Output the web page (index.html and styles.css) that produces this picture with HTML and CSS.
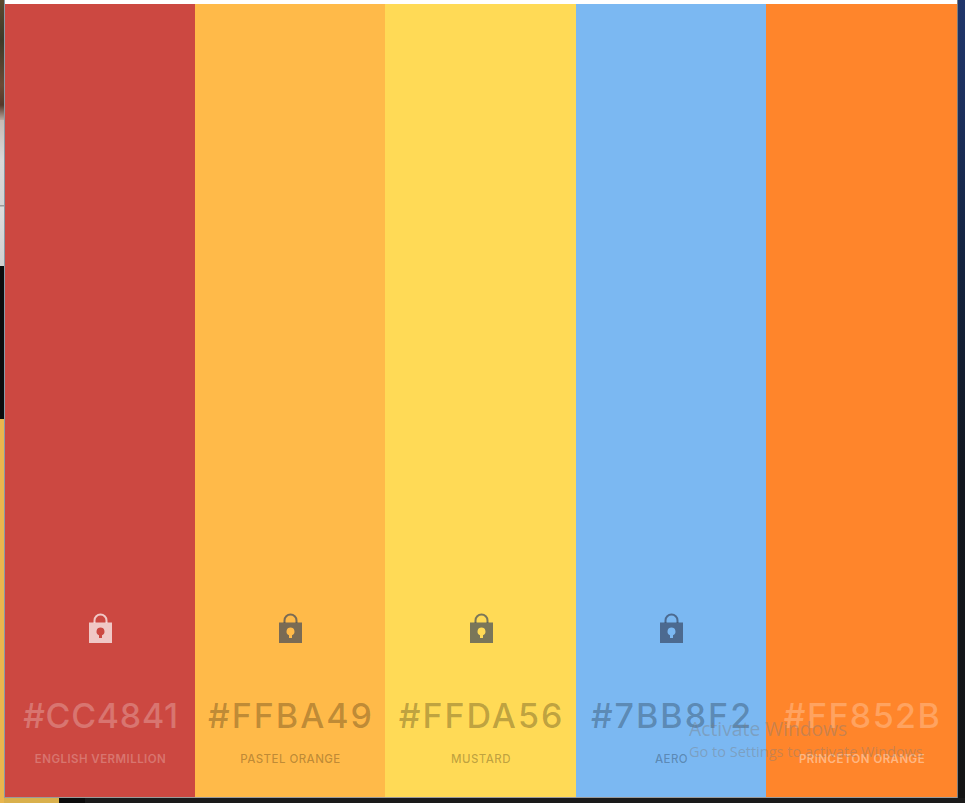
FILE: index.html
```html
<!DOCTYPE html>
<html lang="en">
<head>
  <meta charset="UTF-8" />
  <title>Palette</title>
  <link rel="stylesheet" href="styles.css">
</head>
<body>
  <div class="desktop">
    <div class="side-left">
      <div class="side-photo"></div>
      <div class="side-light"></div>
      <div class="side-black"></div>
      <div class="side-yellow"></div>
    </div>

    <main class="window">
      <div class="palette">
        <section class="swatch swatch-light" style="background: #cc4841;">
          <svg class="lock" viewBox="0 0 23 31" width="23" height="31">
            <path class="shackle" d="M5.500 10V7.500a6 6 0 0 1 12 0V10"/>
            <path class="lock-body" d="M0 9.500h23V30H0z"/>
            <path class="keyhole" style="fill: #cc4841;" d="M11.500 14.500a4 4 0 0 1 1.500 7.700V25h-3v-2.800a4 4 0 0 1 1.500-7.700z"/>
          </svg>
          <div class="hex">#CC4841</div>
          <div class="name">ENGLISH VERMILLION</div>
        </section>

        <section class="swatch" style="background: #ffba49;">
          <svg class="lock" viewBox="0 0 23 31" width="23" height="31">
            <path class="shackle" d="M5.500 10V7.500a6 6 0 0 1 12 0V10"/>
            <path class="lock-body" d="M0 9.500h23V30H0z"/>
            <path class="keyhole" style="fill: #ffba49;" d="M11.500 14.500a4 4 0 0 1 1.500 7.700V25h-3v-2.800a4 4 0 0 1 1.500-7.700z"/>
          </svg>
          <div class="hex">#FFBA49</div>
          <div class="name">PASTEL ORANGE</div>
        </section>

        <section class="swatch" style="background: #ffda56;">
          <svg class="lock" viewBox="0 0 23 31" width="23" height="31">
            <path class="shackle" d="M5.500 10V7.500a6 6 0 0 1 12 0V10"/>
            <path class="lock-body" d="M0 9.500h23V30H0z"/>
            <path class="keyhole" style="fill: #ffda56;" d="M11.500 14.500a4 4 0 0 1 1.500 7.700V25h-3v-2.800a4 4 0 0 1 1.500-7.700z"/>
          </svg>
          <div class="hex">#FFDA56</div>
          <div class="name">MUSTARD</div>
        </section>

        <section class="swatch" style="background: #7bb8f2;">
          <svg class="lock" viewBox="0 0 23 31" width="23" height="31">
            <path class="shackle" d="M5.500 10V7.500a6 6 0 0 1 12 0V10"/>
            <path class="lock-body" d="M0 9.500h23V30H0z"/>
            <path class="keyhole" style="fill: #7bb8f2;" d="M11.500 14.500a4 4 0 0 1 1.500 7.700V25h-3v-2.800a4 4 0 0 1 1.500-7.700z"/>
          </svg>
          <div class="hex">#7BB8F2</div>
          <div class="name">AERO</div>
        </section>

        <section class="swatch swatch-light swatch-bright" style="background: #ff852b;">
          <div class="lock-space"></div>
          <div class="hex">#FF852B</div>
          <div class="name">PRINCETON ORANGE</div>
        </section>
      </div>
    </main>

    <div class="side-right"></div>

    <div class="activate">
      <div class="activate-title">Activate Windows</div>
      <div class="activate-sub">Go to Settings to activate Windows</div>
    </div>
  </div>
</body>
</html>
```

FILE: styles.css
```css
body {
  margin: 0;
  background: #151515;
  font-family: 'Inter', 'Liberation Sans', sans-serif;
  overflow: hidden;
}

.desktop {
  position: relative;
  display: flex;
  width: 965px;
  height: 803px;
  overflow: hidden;
  background: linear-gradient(to right, #d9b04c 0, #d9b04c 59px, #0c0c0c 59px, #0c0c0c 85px, #1a1a1a 85px);
}

.side-left {
  width: 4px;
  display: flex;
  flex-direction: column;
}

.side-photo {
  height: 120px;
  background: linear-gradient(to bottom, #5c4a30 0, #3c3a28 40px, #6b4a35 85px, #54382a 105px, #b9a9a0 120px);
}

.side-light {
  height: 146px;
  background: linear-gradient(to bottom, #c6bab4 0, #d8d8d8 40px, #d4d4d4 85px, #9a9a9a 85px, #9a9a9a 86px, #dcdcdc 87px, #d0d0d0 146px);
}

.side-black {
  height: 153px;
  background: #0c0c0c;
}

.side-yellow {
  height: 384px;
  background: #e9b64e;
}

.window {
  width: 953px;
  height: 798px;
  box-sizing: border-box;
  padding-top: 4px;
  background: #fff;
  border-left: 1px solid #8a9aa6;
  border-bottom: 1px solid #9a9a9a;
}

.palette {
  display: grid;
  grid-template-columns: 190px 190px 191px 190px 191px;
  height: 100%;
}

.swatch {
  display: flex;
  flex-direction: column;
  align-items: center;
  color: rgba(0, 0, 0, 0.27);
}

.swatch-light {
  color: rgba(255, 255, 255, 0.25);
}

.lock, .lock-space {
  margin-top: 609px;
  margin-left: 1px;
  height: 31px;
  flex: none;
}

.shackle {
  fill: none;
  stroke: rgba(51, 65, 90, 0.65);
  stroke-width: 2;
}

.lock-body {
  fill: rgba(51, 65, 90, 0.65);
}

.swatch-light .shackle {
  stroke: rgba(255, 255, 255, 0.7);
}

.swatch-light .lock-body {
  fill: rgba(255, 255, 255, 0.7);
}

.hex {
  margin-top: 50px;
  padding-left: 2px;
  font-size: 34px;
  line-height: 44px;
  font-weight: 500;
  letter-spacing: 2px;
  white-space: nowrap;
}

.swatch-light .hex {
  letter-spacing: 0.7px;
}

.swatch-bright .hex {
  letter-spacing: 1.400px;
}

.name {
  margin-top: 14px;
  padding-left: 1px;
  font-size: 11.500px;
  line-height: 14px;
  font-weight: 500;
  letter-spacing: 0.45px;
  white-space: nowrap;
}

.swatch-light .name {
  font-weight: 600;
}

.swatch-bright .name {
  color: rgba(255, 255, 255, 0.42);
}

.side-right {
  width: 8px;
  height: 798px;
  box-sizing: border-box;
  border-left: 1px solid #7d7d7d;
  background: linear-gradient(to bottom, #20366b 0, #1c2f5c 110px, #14233f 260px, #12161e 480px, #141414 800px);
}

/* watermark sits on top of everything */
.activate {
  position: absolute;
  left: 689px;
  top: 716px;
  font-family: 'Open Sans', 'Noto Sans', sans-serif;
  color: rgba(125, 125, 125, 0.42);
}

.activate-title {
  font-size: 19.300px;
  line-height: 26px;
}

.activate-sub {
  font-size: 14.500px;
  line-height: 20px;
  white-space: nowrap;
}
```
